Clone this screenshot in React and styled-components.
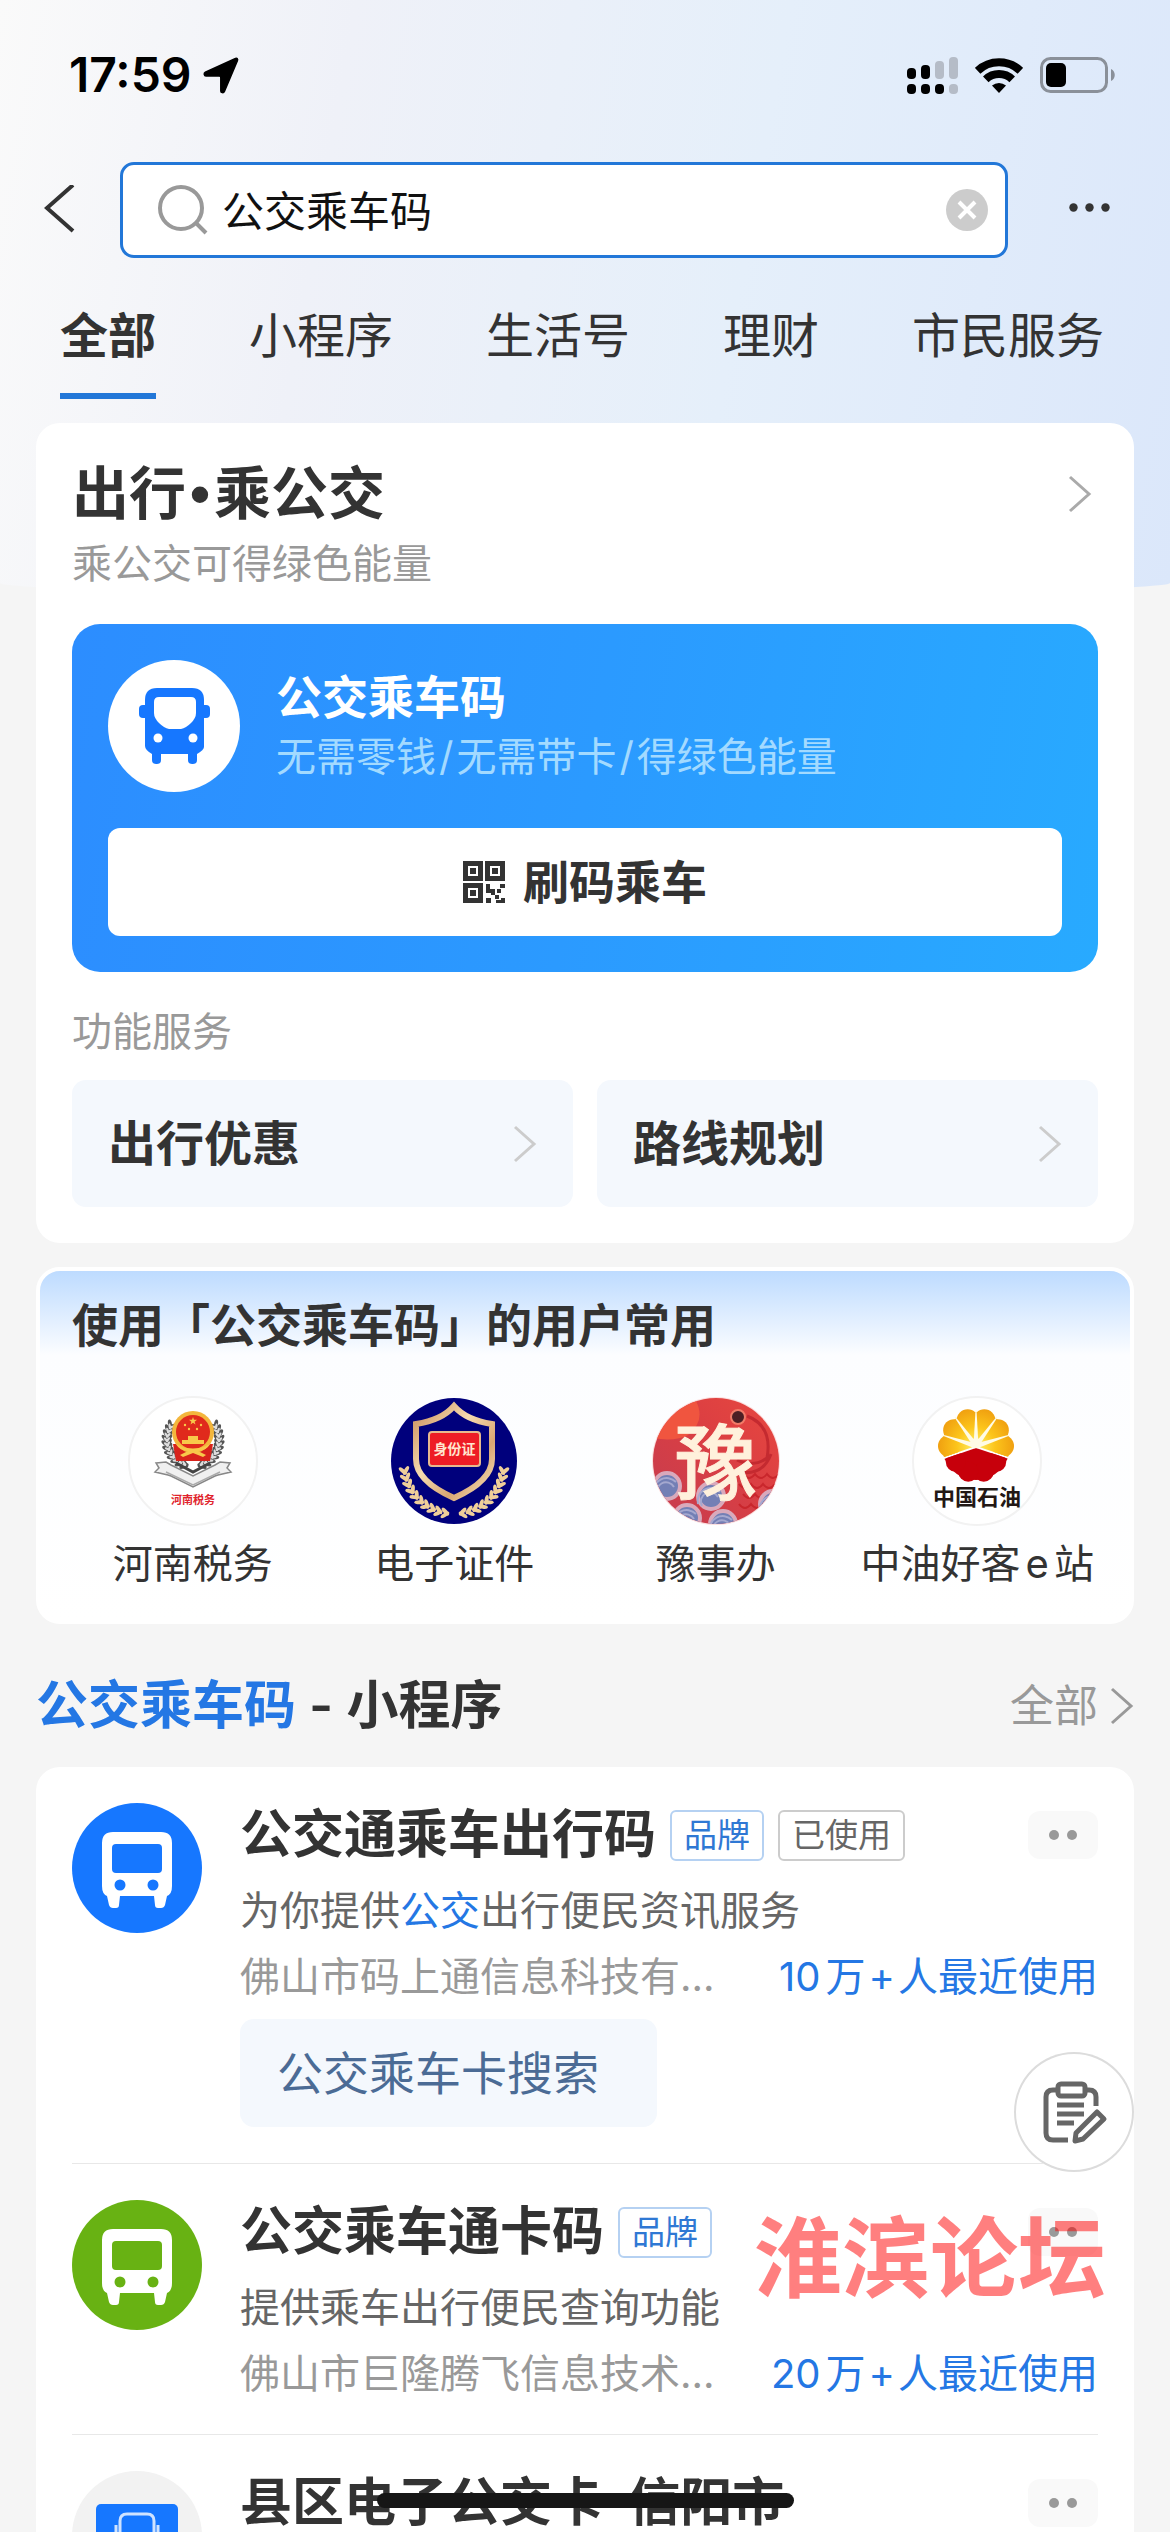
import React from 'react';
import styled, { createGlobalStyle } from 'styled-components';

const GlobalStyle = createGlobalStyle`
  * {
    box-sizing: border-box;
  }
  body {
    margin: 0;
    background-color: #f5f5f5;
    color: #333;
    font-family: Inter, 'Noto Sans CJK SC', sans-serif;
    text-autospace: normal;
  }
  h1, h2, h3, p, ul {
    margin: 0;
    padding: 0;
    list-style: none;
  }
  a {
    color: inherit;
    text-decoration: none;
  }
  button, input {
    font-family: inherit;
    border: none;
    padding: 0;
  }
  svg {
    display: block;
    flex-shrink: 0;
  }
`;

const Page = styled.div`
  position: relative;
  height: 100vh;
  overflow: hidden;
  &::before {
    content: '';
    position: absolute;
    z-index: -1;
    top: 0;
    left: 0;
    right: 0;
    height: 595px;
    border-radius: 0 0 50% 50% / 0 0 12px 12px;
    background: linear-gradient(100deg, #fafafa 0%, #eff1f8 28%, #e5effa 62%, #dbe7fa 100%);
  }
`;

const StatusBar = styled.div`
  display: flex;
  align-items: center;
  height: 150px;
  padding: 0 55px 0 69px;
  gap: 17px;
`;
const Clock = styled.div`
  flex: 1;
  display: flex;
  align-items: center;
  gap: 11px;
`;
const Time = styled.span`
  font-size: 48px;
  line-height: 60px;
  font-weight: 600;
  color: #000;
`;

const SearchRow = styled.header`
  display: flex;
  align-items: center;
  margin-top: 12px;
  padding: 0 60px 0 44px;
`;
const IconButton = styled.button`
  display: flex;
  background: none;
`;
const SearchBox = styled.label`
  flex: 1;
  display: flex;
  align-items: center;
  height: 96px;
  margin: 0 61px 0 44px;
  padding: 0 17px 0 35px;
  gap: 14px;
  border: 3px solid #2277d8;
  border-radius: 14px;
  background-color: #fff;
`;
const SearchInput = styled.input`
  flex: 1;
  min-width: 0;
  height: 84px;
  padding-bottom: 4px;
  font-size: 42px;
  color: #111;
  background: none;
  outline: none;
`;

const Tabs = styled.nav`
  display: flex;
  justify-content: space-between;
  padding: 48px 66px 0 60px;
`;
const Tab = styled.a`
  padding-bottom: 27px;
  font-size: 48px;
  line-height: 60px;
  font-weight: ${({ $active }) => ($active ? 600 : 400)};
  border-bottom: 6px solid ${({ $active }) => ($active ? '#2277d8' : 'transparent')};
`;

const Main = styled.main`
  padding: 24px 36px 0;
`;
const Card = styled.section`
  padding: 36px;
  border-radius: 24px;
  background-color: #fff;
`;
const CardTop = styled.a`
  display: flex;
  align-items: center;
  justify-content: space-between;
  padding-right: 6px;
`;
const CardTitle = styled.h1`
  font-size: 57px;
  line-height: 69px;
  font-weight: 600;
`;
const Bullet = styled.span`
  margin: 0 4px;
  font-family: 'Liberation Sans', sans-serif;
  line-height: 1;
`;
const CardNote = styled.p`
  margin-top: 12px;
  font-size: 40px;
  line-height: 48px;
  color: #999;
`;
const RideCard = styled.div`
  margin: 36px 0;
  padding: 36px;
  border-radius: 28px;
  background: linear-gradient(100deg, #2c8dff 0%, #2b9aff 50%, #28aaff 100%);
`;
const RideInfo = styled.div`
  display: flex;
  align-items: center;
  gap: 36px;
`;
const RideText = styled.div`
  display: flex;
  flex-direction: column;
  gap: 6px;
  padding-bottom: 4px;
`;
const RideTitle = styled.h2`
  font-size: 46px;
  line-height: 60px;
  font-weight: 600;
  color: #fff;
`;
const RideNote = styled.p`
  font-size: 40px;
  line-height: 48px;
  color: #a3daff;
`;
const Sign = styled.span`
  margin: 0 3px;
`;
const RideButton = styled.button`
  display: flex;
  align-items: center;
  justify-content: center;
  gap: 18px;
  width: 100%;
  height: 108px;
  margin-top: 36px;
  border-radius: 12px;
  background-color: #fff;
  color: #333;
  font-size: 46px;
  line-height: 60px;
  font-weight: 600;
`;
const Label = styled.p`
  font-size: 40px;
  line-height: 48px;
  color: #999;
`;
const Tiles = styled.div`
  display: grid;
  grid-template-columns: 1fr 1fr;
  gap: 24px;
  margin-top: 24px;
`;
const Tile = styled.a`
  display: flex;
  align-items: center;
  justify-content: space-between;
  height: 127px;
  padding: 0 36px;
  border-radius: 14px;
  background-color: #f4f8fd;
  font-size: 48px;
  line-height: 60px;
  font-weight: 600;
`;

const UsersCard = styled.section`
  margin-top: 24px;
  padding: 24px 0 32px;
  border: 4px solid #fff;
  border-radius: 24px;
  background: #fff linear-gradient(#bddbff, #fcfdff 84px, #fff) no-repeat;
`;
const UsersTitle = styled.h2`
  padding: 0 32px;
  font-size: 46px;
  line-height: 60px;
  font-weight: 600;
`;
const Apps = styled.ul`
  display: grid;
  grid-template-columns: repeat(4, 1fr);
  margin: 41px 22px 0;
`;
const AppLink = styled.a`
  display: flex;
  flex-direction: column;
  align-items: center;
  gap: 14px;
  font-size: 40px;
  line-height: 48px;
  white-space: nowrap;
`;

const SectionHead = styled.div`
  display: flex;
  align-items: center;
  justify-content: space-between;
  padding: 46px 0 25px;
`;
const SectionTitle = styled.h2`
  font-size: 52px;
  line-height: 72px;
  font-weight: 600;
`;
const Mark = styled.span`
  color: #2477e4;
`;
const More = styled.a`
  display: flex;
  align-items: center;
  gap: 12px;
  font-size: 44px;
  line-height: 72px;
  color: #999;
`;

const List = styled.ul`
  padding: 0 36px;
  border-radius: 24px;
  background-color: #fff;
`;
const Item = styled.li`
  display: flex;
  align-items: flex-start;
  gap: 38px;
  padding: 36px 0;
  & + & {
    border-top: 1px solid #e8e8e8;
  }
`;
const ItemBody = styled.div`
  flex: 1;
  min-width: 0;
`;
const ItemHead = styled.div`
  display: flex;
  align-items: center;
  gap: 14px;
  height: 64px;
`;
const ItemTitle = styled.h3`
  font-size: 52px;
  line-height: 56px;
  font-weight: 600;
  white-space: nowrap;
`;
const Badge = styled.span`
  height: 51px;
  padding: 0 12px;
  border: 2px solid ${({ $brand }) => ($brand ? '#b5d1f2' : '#ccc')};
  border-radius: 6px;
  font-size: 33px;
  line-height: 47px;
  color: ${({ $brand }) => ($brand ? '#2f78d4' : '#666')};
  white-space: nowrap;
`;
const DotsButton = styled.button`
  display: flex;
  align-items: center;
  justify-content: center;
  gap: 8px;
  width: 70px;
  height: 48px;
  margin-left: auto;
  border-radius: 12px;
  background-color: #f9f9f9;
`;
const Dot = styled.i`
  width: 10px;
  height: 10px;
  border-radius: 50%;
  background-color: #999;
`;
const ItemDesc = styled.p`
  margin-top: 20px;
  font-size: 40px;
  line-height: 48px;
  color: #666;
`;
const ItemMeta = styled.p`
  display: flex;
  justify-content: space-between;
  margin-top: 18px;
  font-size: 40px;
  line-height: 48px;
  color: #999;
`;
const QuickLink = styled.a`
  display: inline-flex;
  align-items: center;
  height: 108px;
  margin-top: 18px;
  padding: 0 58px 0 37px;
  border-radius: 14px;
  background-color: #f4f8fd;
  font-size: 46px;
  line-height: 60px;
  color: #4b6b95;
  vertical-align: top;
`;

const FloatingButton = styled.button`
  position: fixed;
  right: 36px;
  bottom: 360px;
  width: 120px;
  height: 120px;
  border-radius: 50%;
  background-color: #fff;
  box-shadow: inset 0 0 0 2px #dcdcdc;
`;
const Watermark = styled.p`
  position: fixed;
  right: 64px;
  bottom: 226px;
  font-size: 88px;
  line-height: 96px;
  font-weight: 700;
  color: rgba(255, 0, 0, 0.5);
`;
const HomeBar = styled.div`
  position: fixed;
  left: 50%;
  bottom: 24px;
  width: 417px;
  height: 15px;
  margin-left: -208px;
  border-radius: 8px;
  background-color: #161616;
`;

const Chevron = ({ color = '#bbb' }) => (
  <svg width='24' height='38' viewBox='0 0 24 38' fill='none' stroke={color} strokeWidth='3'>
    <path d='M2 2l19 17L2 36' />
  </svg>
);

const LocationIcon = () => (
  <svg width='36' height='37' viewBox='0 0 36 37' stroke='#000' strokeWidth='1.500'>
    <path d='M32.500 1.500c1.600-.7 2.600.5 1.900 2.100L21.400 34.500c-.8 1.800-3.600 1.400-3.600-.6V20.500c0-1-.5-1.500-1.500-1.500H3C1 19 .5 16 2.300 15.200z' />
  </svg>
);

const SignalIcon = () => (
  <svg width='51' height='37' viewBox='0 0 51 37'>
    <g fill='#b5bcc7'>
      <rect x='28' y='4' width='9' height='18' rx='4' />
      <rect x='42' y='0' width='9' height='22' rx='4' />
      <rect x='42' y='27' width='9' height='10' rx='4' />
    </g>
    <rect x='0' y='11' width='9' height='11' rx='4' />
    <rect x='14' y='8' width='9' height='14' rx='4' />
    <rect x='0' y='27' width='9' height='10' rx='4' />
    <rect x='14' y='27' width='9' height='10' rx='4' />
    <rect x='28' y='27' width='9' height='10' rx='4' />
  </svg>
);

const WifiIcon = () => (
  <svg width='48' height='36' viewBox='0 0 48 36'>
    <g fill='none' stroke='#000' strokeWidth='8'>
      <path d='M2.600 13.800A31 31 0 0 1 45.400 13.800' />
      <path d='M10.800 22.300A19 19 0 0 1 37.200 22.300' />
    </g>
    <path d='M24 36L17 28.500A11 11 0 0 1 31 28.500z' />
  </svg>
);

const BatteryIcon = () => (
  <svg width='75' height='36' viewBox='0 0 75 36'>
    <rect x='1.500' y='1.500' width='65' height='33' rx='9' fill='none' stroke='#8a9099' strokeWidth='3' />
    <rect x='6' y='6' width='20' height='24' rx='5' />
    <path d='M71 12c5 2 5 10 0 12z' fill='#8a9099' />
  </svg>
);

const BackIcon = () => (
  <svg width='32' height='50' viewBox='0 0 32 50' fill='none' stroke='#333' strokeWidth='4'>
    <path d='M29 0L3 23l26 23' />
  </svg>
);

const SearchIcon = () => (
  <svg width='50' height='50' viewBox='0 0 50 50' fill='none' stroke='#999' strokeWidth='4'>
    <circle cx='23' cy='23' r='21' />
    <path d='M38 38l10 10' />
  </svg>
);

const ClearIcon = () => (
  <svg width='42' height='42' viewBox='0 0 42 42'>
    <circle cx='21' cy='21' r='21' fill='#ccc' />
    <path d='M13 13l16 16M29 13L13 29' stroke='#fff' strokeWidth='4' />
  </svg>
);

const MoreIcon = () => (
  <svg width='41' height='14' viewBox='0 0 41 14' fill='#333'>
    <circle cx='4.500' cy='4.500' r='4.200' />
    <circle cx='20.500' cy='4.500' r='4.200' />
    <circle cx='36.500' cy='4.500' r='4.200' />
  </svg>
);

const RideIcon = () => (
  <svg width='132' height='132' viewBox='0 0 132 132'>
    <circle cx='66' cy='66' r='66' fill='#fff' />
    <g fill='#1677ff'>
      <path d='M49 28h35q12 0 12 12v47q0 3-7 7H44q-7-4-7-8V40q0-12 12-12z' />
      <rect x='31' y='45' width='71' height='13' rx='4' />
      <rect x='44' y='86' width='9' height='18' rx='4' />
      <rect x='80' y='86' width='9' height='18' rx='4' />
    </g>
    <g fill='#fff'>
      <path d='M51 37h32q5 0 5 5v11q0 5-5 10t-10 6H61q-5-1-10-6t-5-10V42q0-5 5-5z' />
      <circle cx='50' cy='78' r='4.500' />
      <circle cx='85' cy='78' r='4.500' />
    </g>
  </svg>
);

const QrIcon = () => (
  <svg width='42' height='42' viewBox='0 0 42 42' fill='#333'>
    {[[0, 0], [22, 0], [0, 22]].map(([x, y]) => (
      <g key={`${x}-${y}`} transform={`translate(${x} ${y})`}>
        <path fillRule='evenodd' d='M0 0h20v20H0zM5 5v10h10V5z' />
        <rect x='7' y='7' width='6' height='6' />
      </g>
    ))}
    <path d='M23 23h4v5h5v6h-4v-2h-5zM37 23h5v4h-5zM34 28h4v4h-4zM23 37h5v5h-5zM32 34h4v4h-4zM38 37h4v5h-9v-3h5z' />
  </svg>
);

const BusIcon = ({ color }) => (
  <svg width='130' height='130' viewBox='0 0 130 130'>
    <circle cx='65' cy='65' r='65' fill={color} />
    <path d='M41 29h48q11 0 11 11v43q0 8-5 10l-2 9q-1 3-4 3h-3q-3 0-3-3l-1-9H48l-1 9q0 3-3 3h-3q-3 0-4-3l-2-9q-5-2-5-10V40q0-11 11-11z' fill='#fff' />
    <g fill={color}>
      <rect x='40' y='41' width='50' height='29' rx='4' />
      <circle cx='48' cy='82' r='5.500' />
      <circle cx='81' cy='82' r='5.500' />
    </g>
  </svg>
);

const BusCardIcon = () => (
  <svg width='130' height='130' viewBox='0 0 130 130'>
    <circle cx='65' cy='65' r='65' fill='#f2f2f2' />
    <rect x='24' y='33' width='82' height='64' rx='5' fill='#1677ff' />
    <g fill='none' stroke='#cfe3ff' strokeWidth='3'>
      <path d='M48 82V50q0-7 7-7h20q7 0 7 7v32zM48 68h34M44 54v10M86 54v10' />
    </g>
  </svg>
);

const NoteIcon = () => (
  <svg width='120' height='120' viewBox='0 0 120 120' fill='none' stroke='#666' strokeWidth='5'>
    <rect x='44' y='32' width='27' height='12' rx='3' />
    <path d='M44 38h-5q-7 0-7 7v36q0 7 7 7h15M71 38h4q7 0 7 7v9M43 53h27M43 62h27M43 71h17' />
    <path d='M83 60l7 7-21 20-8 2 1-8z' strokeLinejoin='round' />
  </svg>
);

// ear of wheat: pairs of leaves along an arc, angles in degrees
const Wheat = ({ cx, cy, r, from, to, count, fill, size }) =>
  Array.from({ length: count }, (_, i) => {
    const a = from + ((to - from) * i) / (count - 1);
    const x = cx + r * Math.cos((a * Math.PI) / 180);
    const y = cy + r * Math.sin((a * Math.PI) / 180);
    return (
      <g key={i} transform={`translate(${x} ${y}) rotate(${a})`} fill={fill}>
        <ellipse cx={size / 2} cy='0' rx={size} ry={size * 0.4} transform='rotate(-50)' />
        <ellipse cx={-size / 2} cy='0' rx={size} ry={size * 0.4} transform='rotate(50)' />
      </g>
    );
  });

const MirroredWheat = (props) => (
  <>
    <Wheat {...props} />
    <g transform={`translate(${props.cx * 2} 0) scale(-1 1)`}>
      <Wheat {...props} />
    </g>
  </>
);

const STAR = 'M0-5l1.200 3.500H5L2 .8 3.100 4.500 0 2.200-3.100 4.500-2 .8-5-1.500h3.800z';

const TaxLogo = () => (
  <svg width='130' height='130' viewBox='0 0 130 130'>
    <circle cx='65' cy='65' r='64' fill='#fff' stroke='#f2f2f2' strokeWidth='2' />
    <MirroredWheat cx={65} cy={44} r={26} from={-30} to={75} count={11} fill='#555' size={5} />
    <MirroredWheat cx={65} cy={44} r={26} from={-28} to={72} count={11} fill='#ddd' size={3} />
    <path d='M45 48h40l-3 17H48z' fill='#d8231c' />
    <circle cx='65' cy='36' r='21' fill='#f3b63c' />
    <circle cx='65' cy='36' r='17' fill='#e02a1c' />
    <g fill='#f8c84a'>
      <path d={STAR} transform='translate(65 25) scale(.8)' />
      <circle cx='57' cy='29' r='1.200' />
      <circle cx='73' cy='29' r='1.200' />
      <circle cx='61' cy='33' r='1.200' />
      <circle cx='69' cy='33' r='1.200' />
      <path d='M60 40h10v4h6v4H54v-4h6zM48 48q17 9 34 0-4 7-12 7l8 4-3 2-10-4-10 4-3-2 8-4q-8 0-12-7z' />
    </g>
    <path d='M28 67l10-1 5 3 22 11 22-11 5-3 10 1-3 5 4 4-13 3-3 1-22 11-22-11-3-1-13-3 4-4z' fill='#f0f0f0' stroke='#888' strokeWidth='1.500' />
    <path d='M38 76l27 13 27-13' fill='none' stroke='#aaa' strokeWidth='1.500' />
    <path d='M48 67l17 9 17-9' fill='none' stroke='#444' strokeWidth='3' />
    <text x='65' y='108' textAnchor='middle' fontSize='11' fontWeight='700' fill='#e0242c'>河南税务</text>
  </svg>
);

const IdLogo = () => (
  <svg width='130' height='130' viewBox='0 0 130 130'>
    <defs>
      <linearGradient id='gold' x1='0' y1='0' x2='1' y2='1'>
        <stop offset='0' stopColor='#c98f5e' />
        <stop offset='.4' stopColor='#f6dcb0' />
        <stop offset='.7' stopColor='#d9a673' />
        <stop offset='1' stopColor='#f9e3bb' />
      </linearGradient>
    </defs>
    <circle cx='65' cy='65' r='63' fill='#00007c' />
    <path d='M65 10q12 14 38 18v35q0 22-38 39-38-17-38-39V28q26-4 38-18z' fill='none' stroke='url(#gold)' strokeWidth='6' />
    <rect x='40' y='36' width='51' height='34' rx='3' fill='#ee1c25' stroke='#e6b98f' strokeWidth='2' />
    <text x='65.500' y='58' textAnchor='middle' fontSize='14' fontWeight='700' fill='#ffe6cf'>身份证</text>
    <MirroredWheat cx={65} cy={68} r={50} from={10} to={82} count={10} fill='#f0cf9a' size={5} />
  </svg>
);

const YuLogo = () => (
  <svg width='130' height='130' viewBox='0 0 130 130'>
    <defs>
      <linearGradient id='yu' x1='0' y1='1' x2='1' y2='0'>
        <stop offset='0' stopColor='#c43c50' />
        <stop offset='.6' stopColor='#dc3f42' />
        <stop offset='1' stopColor='#e8483f' />
      </linearGradient>
      <clipPath id='yuClip'>
        <circle cx='65' cy='65' r='63' />
      </clipPath>
    </defs>
    <circle cx='65' cy='65' r='64' fill='#fbdede' />
    <g clipPath='url(#yuClip)'>
      <rect width='130' height='130' fill='url(#yu)' />
      <path d='M0 42Q10 15 45 5q10 20-8 34Q25 46 0 42z' fill='#f0553f' />
      <path d='M96 20q26 10 20 42-14 10-30 2M88 76q24 4 32-18' fill='none' stroke='#c42a30' strokeWidth='3' />
      <g fill='none' stroke='#c9262c' strokeWidth='2'>
        <path d='M92 78q6 8 12 0 6 8 12 0 6 8 12 0M88 88q6 8 12 0 6 8 12 0 6 8 12 0M92 98q6 8 12 0 6 8 12 0M88 108q6 8 12 0 6 8 12 0' />
      </g>
      {[[16, 90], [36, 122], [72, 128], [122, 108], [60, 100]].map(([x, y]) => (
        <g key={x} transform={`translate(${x} ${y})`} fill='none'>
          <circle r='13' fill='#737fb5' stroke='#d9a9bb' strokeWidth='4' />
          <path d='M-13 8a13 13 0 0 1 22-12M-9 10a9 9 0 0 1 16-9' stroke='#a5a8cf' strokeWidth='2' />
        </g>
      ))}
      <circle cx='87' cy='21' r='7' fill='#4d1f24' stroke='#f17b68' strokeWidth='2' />
      <text x='65' y='97' textAnchor='middle' fontSize='82' fontWeight='500' fill='#fff1dc' stroke='#fff1dc' strokeWidth='1'>豫</text>
    </g>
  </svg>
);

const petals = Array.from({ length: 10 }, (_, i) => {
  const a = ((18 + i * 36) * Math.PI) / 180;
  return [Math.sin(a), -Math.cos(a)];
});

const OilLogo = () => (
  <svg width='130' height='130' viewBox='0 0 130 130'>
    <defs>
      <radialGradient id='sun' cx='64' cy='50' r='38' gradientUnits='userSpaceOnUse'>
        <stop offset='0' stopColor='#fff36b' />
        <stop offset='.5' stopColor='#fcc51b' />
        <stop offset='1' stopColor='#f0a010' />
      </radialGradient>
      <clipPath id='oilTop'>
        <path d='M0 0h130v72L64 50 0 72z' />
      </clipPath>
      <clipPath id='oilBottom'>
        <path d='M0 130V74l64-22 66 22v56z' />
      </clipPath>
    </defs>
    <circle cx='65' cy='65' r='64' fill='#fff' stroke='#f2f2f2' strokeWidth='2' />
    <g clipPath='url(#oilTop)' fill='url(#sun)'>
      <circle cx='64' cy='50' r='34' />
      {petals.map(([x, y], i) => (
        <circle key={i} cx={64 + x * 27} cy={50 + y * 27} r='11' />
      ))}
    </g>
    <g clipPath='url(#oilBottom)' fill='#c7000b'>
      <circle cx='64' cy='50' r='34' />
      {petals.map(([x, y], i) => (
        <circle key={i} cx={64 + x * 25} cy={50 + y * 27} r='10' />
      ))}
    </g>
    <g fill='#fffbe6'>
      {[-72, -36, 0, 36, 72].map((a) => (
        <path key={a} d='M61.500 50l2-36h1l2 36z' transform={`rotate(${a} 64 50)`} />
      ))}
      <circle cx='64' cy='47' r='5' />
    </g>
    <text x='65' y='109' textAnchor='middle' fontSize='22' fontWeight='700' fill='#231815'>中国石油</text>
  </svg>
);

const tabs = ['全部', '小程序', '生活号', '理财', '市民服务'];

const apps = [
  { name: '河南税务', Logo: TaxLogo },
  { name: '电子证件', Logo: IdLogo },
  { name: '豫事办', Logo: YuLogo },
  { name: '中油好客e站', Logo: OilLogo },
];

const programs = [
  {
    icon: <BusIcon color='#1677ff' />,
    title: '公交通乘车出行码',
    brand: true,
    used: true,
    desc: <>为你提供<Mark>公交</Mark>出行便民资讯服务</>,
    company: '佛山市码上通信息科技有...',
    count: '10万',
    link: '公交乘车卡搜索',
  },
  {
    icon: <BusIcon color='#68b213' />,
    title: '公交乘车通卡码',
    brand: true,
    desc: '提供乘车出行便民查询功能',
    company: '佛山市巨隆腾飞信息技术...',
    count: '20万',
  },
  {
    icon: <BusCardIcon />,
    title: '县区电子公交卡-信阳市',
  },
];

const Program = ({ icon, title, brand, used, desc, company, count, link }) => (
  <Item>
    {icon}
    <ItemBody>
      <ItemHead>
        <ItemTitle>{title}</ItemTitle>
        {brand && <Badge $brand>品牌</Badge>}
        {used && <Badge>已使用</Badge>}
        <DotsButton aria-label='更多'>
          <Dot />
          <Dot />
        </DotsButton>
      </ItemHead>
      {desc && <ItemDesc>{desc}</ItemDesc>}
      {company && (
        <ItemMeta>
          <span>{company}</span>
          <Mark>
            {count}
            <Sign>+</Sign>人最近使用
          </Mark>
        </ItemMeta>
      )}
      {link && <QuickLink href='#search'>{link}</QuickLink>}
    </ItemBody>
  </Item>
);

const App = () => {
  return (
    <Page>
      <GlobalStyle />
      <StatusBar>
        <Clock>
          <Time>17:59</Time>
          <LocationIcon />
        </Clock>
        <SignalIcon />
        <WifiIcon />
        <BatteryIcon />
      </StatusBar>

      <SearchRow>
        <IconButton aria-label='返回'>
          <BackIcon />
        </IconButton>
        <SearchBox>
          <SearchIcon />
          <SearchInput type='text' aria-label='搜索' defaultValue='公交乘车码' />
          <IconButton aria-label='清除'>
            <ClearIcon />
          </IconButton>
        </SearchBox>
        <IconButton aria-label='更多'>
          <MoreIcon />
        </IconButton>
      </SearchRow>

      <Tabs>
        {tabs.map((tab, i) => (
          <Tab key={tab} href='#tab' $active={i === 0}>
            {tab}
          </Tab>
        ))}
      </Tabs>

      <Main>
        <Card>
          <CardTop href='#ride'>
            <CardTitle>
              出行<Bullet>•</Bullet>乘公交
            </CardTitle>
            <Chevron color='#aaa' />
          </CardTop>
          <CardNote>乘公交可得绿色能量</CardNote>
          <RideCard>
            <RideInfo>
              <RideIcon />
              <RideText>
                <RideTitle>公交乘车码</RideTitle>
                <RideNote>
                  无需零钱<Sign>/</Sign>无需带卡<Sign>/</Sign>得绿色能量
                </RideNote>
              </RideText>
            </RideInfo>
            <RideButton>
              <QrIcon />
              刷码乘车
            </RideButton>
          </RideCard>
          <Label>功能服务</Label>
          <Tiles>
            <Tile href='#deals'>
              出行优惠
              <Chevron color='#ccc' />
            </Tile>
            <Tile href='#routes'>
              路线规划
              <Chevron color='#ccc' />
            </Tile>
          </Tiles>
        </Card>

        <UsersCard>
          <UsersTitle>使用「公交乘车码」的用户常用</UsersTitle>
          <Apps>
            {apps.map(({ name, Logo }) => (
              <li key={name}>
                <AppLink href='#app'>
                  <Logo />
                  {name}
                </AppLink>
              </li>
            ))}
          </Apps>
        </UsersCard>

        <SectionHead>
          <SectionTitle>
            <Mark>公交乘车码</Mark> - 小程序
          </SectionTitle>
          <More href='#all'>
            全部
            <Chevron color='#999' />
          </More>
        </SectionHead>
        <List>
          {programs.map((program) => (
            <Program key={program.title} {...program} />
          ))}
        </List>
      </Main>

      <FloatingButton aria-label='反馈'>
        <NoteIcon />
      </FloatingButton>
      <Watermark>淮滨论坛</Watermark>
      <HomeBar />
    </Page>
  );
};

export default App;
